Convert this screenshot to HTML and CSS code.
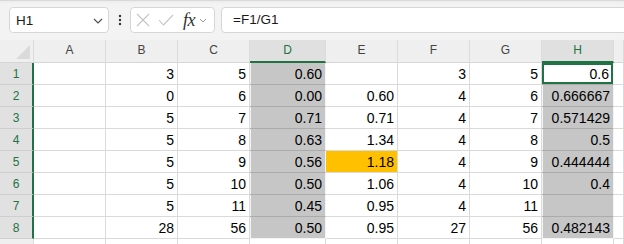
FILE: index.html
```html
<html>
<head>
    <title>Sheet</title>
    <link rel="stylesheet" href="styles.css">
</head>
<body>
<div class="app">
    <div class="toolbar">
        <div class="namebox">
            <span>H1</span>
            <svg class="chev" width="10" height="6" viewBox="0 0 10 6"><polyline points="1,1 5,5 9,1" fill="none" stroke="#505050" stroke-width="1.2"/></svg>
        </div>
        <div class="dots">
            <svg width="4" height="12" viewBox="0 0 4 12"><circle cx="2" cy="2" r="1.2" fill="#333"/><circle cx="2" cy="6" r="1.2" fill="#333"/><circle cx="2" cy="10" r="1.2" fill="#333"/></svg>
        </div>
        <div class="fxbox">
            <svg width="14" height="14" viewBox="0 0 14 14"><path d="M1 1 L13 13 M13 1 L1 13" stroke="#c4c4c4" stroke-width="1.1" fill="none"/></svg>
            <svg class="check" width="16" height="12" viewBox="0 0 16 12"><polyline points="1,6 5.5,11 15,1" fill="none" stroke="#c4c4c4" stroke-width="1.1"/></svg>
            <span class="fx">fx</span>
            <svg width="8" height="5" viewBox="0 0 8 5"><polyline points="1,1 4,4 7,1" fill="none" stroke="#9a9a9a" stroke-width="1"/></svg>
        </div>
        <div class="formula">=F1/G1</div>
    </div>

    <div class="sheet">
        <div class="corner"><span class="tri"></span></div>
        <div class="ch">A</div>
        <div class="ch">B</div>
        <div class="ch">C</div>
        <div class="ch on">D</div>
        <div class="ch">E</div>
        <div class="ch">F</div>
        <div class="ch">G</div>
        <div class="ch on">H</div>
        <div class="ch"></div>

        <div class="rh on">1</div>
        <div class="c"></div><div class="c">3</div><div class="c">5</div><div class="c s">0.60</div><div class="c"></div><div class="c">3</div><div class="c">5</div><div class="c act">0.6</div><div class="c"></div>

        <div class="rh on">2</div>
        <div class="c"></div><div class="c">0</div><div class="c">6</div><div class="c s">0.00</div><div class="c">0.60</div><div class="c">4</div><div class="c">6</div><div class="c s">0.666667</div><div class="c"></div>

        <div class="rh on">3</div>
        <div class="c"></div><div class="c">5</div><div class="c">7</div><div class="c s">0.71</div><div class="c">0.71</div><div class="c">4</div><div class="c">7</div><div class="c s">0.571429</div><div class="c"></div>

        <div class="rh on">4</div>
        <div class="c"></div><div class="c">5</div><div class="c">8</div><div class="c s">0.63</div><div class="c">1.34</div><div class="c">4</div><div class="c">8</div><div class="c s">0.5</div><div class="c"></div>

        <div class="rh on">5</div>
        <div class="c"></div><div class="c">5</div><div class="c">9</div><div class="c s">0.56</div><div class="c hl">1.18</div><div class="c">4</div><div class="c">9</div><div class="c s">0.444444</div><div class="c"></div>

        <div class="rh on">6</div>
        <div class="c"></div><div class="c">5</div><div class="c">10</div><div class="c s">0.50</div><div class="c">1.06</div><div class="c">4</div><div class="c">10</div><div class="c s">0.4</div><div class="c"></div>

        <div class="rh on">7</div>
        <div class="c"></div><div class="c">5</div><div class="c">11</div><div class="c s">0.45</div><div class="c">0.95</div><div class="c">4</div><div class="c">11</div><div class="c s"></div><div class="c"></div>

        <div class="rh on">8</div>
        <div class="c"></div><div class="c">28</div><div class="c">56</div><div class="c s end">0.50</div><div class="c">0.95</div><div class="c">27</div><div class="c">56</div><div class="c s end">0.482143</div><div class="c"></div>

        <div class="rh"></div>
        <div class="c"></div><div class="c"></div><div class="c"></div><div class="c"></div><div class="c"></div><div class="c"></div><div class="c"></div><div class="c"></div><div class="c"></div>
    </div>
</div>
</body>
</html>
```

FILE: styles.css
```css
*{
    margin: 0;
    padding: 0;
    box-sizing: border-box;
}
body{
    width: 624px;
    height: 244px;
    overflow: hidden;
    background: #fff;
    font-family: 'Liberation Sans', Arial, sans-serif;
}
.app{
    width: 624px;
    height: 244px;
    overflow: hidden;
}

/* formula bar */
.toolbar{
    height: 40px;
    display: flex;
    align-items: center;
    padding-left: 9px;
    background: #f3f3f3;
    box-shadow: inset 0 1px 0 #d9d9d9, inset 0 3px 3px -2px #e2e2e2;
}
.namebox{
    width: 100px;
    height: 26px;
    background: #fff;
    border: 1px solid #d6d6d6;
    border-radius: 4px;
    display: flex;
    align-items: center;
    justify-content: space-between;
    padding: 0 5px 0 6px;
    font-size: 13.5px;
    color: #1a1a1a;
}
.namebox .chev{
    margin-top: 1px;
}
.dots{
    width: 21px;
    display: flex;
    justify-content: center;
    padding-left: 1px;
}
.fxbox{
    width: 85px;
    height: 26px;
    background: #fff;
    border: 1px solid #d6d6d6;
    border-radius: 4px;
    display: flex;
    align-items: center;
    padding-left: 5px;
}
.fxbox .check{
    margin-left: 8px;
}
.fx{
    font-family: 'Liberation Serif', serif;
    font-style: italic;
    font-size: 18px;
    color: #333;
    margin-left: 9px;
    margin-right: 4px;
    letter-spacing: -0.5px;
}
.formula{
    flex: 1;
    height: 26px;
    margin-left: 6px;
    margin-right: -10px;
    background: #fff;
    border: 1px solid #d6d6d6;
    border-radius: 4px;
    padding-left: 11px;
    font-size: 13.5px;
    line-height: 24px;
    color: #1a1a1a;
}

/* grid */
.sheet{
    display: grid;
    grid-template-columns: 34px 72px 72px 72px 76px 72px 72px 72px 72px 10px;
    grid-template-rows: 23px repeat(8, 22px) 22px;
}
.corner{
    background: #efefef;
    border-right: 1px solid #dcdcdc;
    border-bottom: 1px solid #d6d6d6;
    position: relative;
}
.corner .tri{
    position: absolute;
    right: 3px;
    bottom: 3px;
    width: 0;
    height: 0;
    border-left: 14px solid transparent;
    border-bottom: 14px solid #dadada;
}
.ch{
    background: #efefef;
    border-right: 1px solid #dcdcdc;
    border-bottom: 1px solid #d6d6d6;
    text-align: center;
    font-size: 12px;
    line-height: 20px;
    color: #444;
}
.ch.on{
    background: #e0e0e0;
    color: #217346;
    border-bottom: 2px solid #217346;
}
.rh{
    background: #efefef;
    border-right: 1px solid #dcdcdc;
    border-bottom: 1px solid #d6d6d6;
    text-align: center;
    font-size: 12px;
    line-height: 22px;
    color: #444;
}
.rh.on{
    background: #e1e1e1;
    color: #217346;
    border-right: 2px solid #217346;
    border-bottom-color: #cfcfcf;
}
.c{
    border-right: 1px solid #dadada;
    border-bottom: 1px solid #dadada;
    text-align: right;
    padding-right: 3px;
    font-size: 14px;
    line-height: 22px;
    color: #000;
    overflow: hidden;
    white-space: nowrap;
}
.c.s{
    background: #c6c6c6;
    border-bottom-color: #ababab;
    border-right-color: #f4f4f4;
    box-shadow: inset 1px 0 0 #f4f4f4;
}
.c.s.end{
    border-bottom-color: #f4f4f4;
}
.c.act{
    background: #fff;
    border-bottom-color: #ababab;
    border-right-color: #f4f4f4;
    box-shadow: inset 0 0 0 2px #217346;
    padding-right: 4px;
}
.c.hl{
    background: #ffc000;
}
```
